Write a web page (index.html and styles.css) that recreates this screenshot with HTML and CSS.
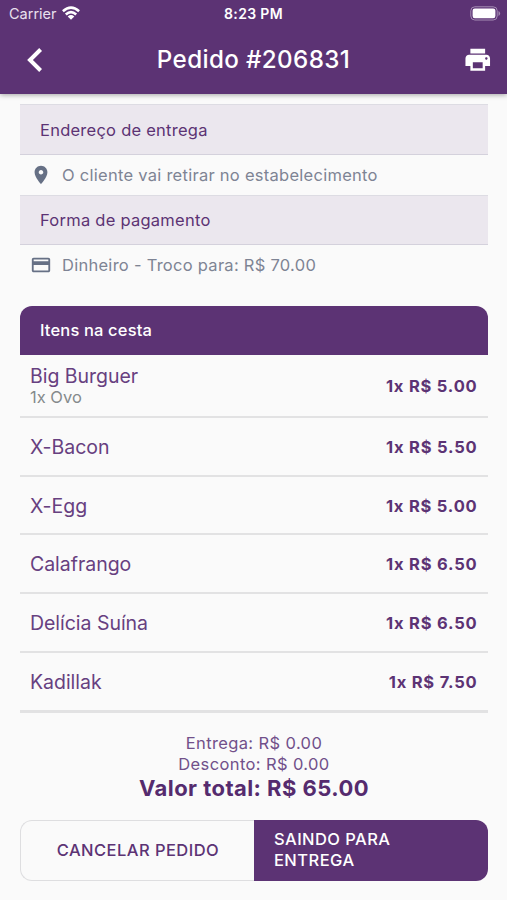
FILE: index.html
```html
<!DOCTYPE html>
<html lang="pt-BR">
<head>
<meta charset="utf-8">
<title>Pedido #206831</title>
<link rel="stylesheet" href="styles.css">
</head>
<body>
<header class="app-bar">
  <div class="status">
    <div class="carrier"><span>Carrier</span>
      <svg class="wifi" width="18" height="14" viewBox="0 0 18 14" fill="none" stroke="#fff" stroke-width="2.6"><path d="M.9 5.2Q9-1.8 17.1 5.2M3.8 8.5Q9 3.9 14.2 8.5"/><path d="M9 13.8L5.7 10.5Q9 7.7 12.3 10.5Z" fill="#fff" stroke="none"/></svg>
    </div>
    <span class="clock">8:23 PM</span>
    <svg class="battery" width="31" height="15" viewBox="0 0 31 15"><rect x=".8" y=".8" width="26.4" height="13.2" rx="4" fill="none" stroke="#a58db4" stroke-width="1"/><rect x="2.6" y="2.6" width="22.8" height="9.6" rx="2.2" fill="#fff"/><path d="M28.5 5v5q1.6-.8 1.6-2.5T28.5 5Z" fill="#a58db4"/></svg>
  </div>
  <div class="nav">
    <svg class="back" width="16" height="24" viewBox="0 0 16 24" fill="none" stroke="#fff" stroke-width="4"><path d="M13.6 1.5L3 12l10.6 10.5"/></svg>
    <h1 class="title">Pedido #206831</h1>
    <svg class="print" width="29.5" height="29.5" viewBox="0 0 24 24" fill="#fff"><path d="M19 8H5c-1.66 0-3 1.34-3 3v6h4v4h12v-4h4v-6c0-1.66-1.34-3-3-3zm-3 11H8v-5h8v5zm3-7c-.55 0-1-.45-1-1s.45-1 1-1 1 .45 1 1-.45 1-1 1zm-1-9H6v4h12V3z"/></svg>
  </div>
</header>
<main class="content">
  <h2 class="section">Endereço de entrega</h2>
  <div class="detail">
    <svg width="22" height="22" viewBox="0 0 24 24" fill="#667085"><path d="M12 2C8.13 2 5 5.13 5 9c0 5.25 7 13 7 13s7-7.75 7-13c0-3.87-3.13-7-7-7zm0 9.5c-1.38 0-2.5-1.12-2.5-2.5s1.12-2.5 2.5-2.5 2.5 1.12 2.5 2.5-1.12 2.5-2.5 2.5z"/></svg>
    <span>O cliente vai retirar no estabelecimento</span>
  </div>
  <h2 class="section payment">Forma de pagamento</h2>
  <div class="detail">
    <svg width="22" height="22" viewBox="0 0 24 24" fill="#667085"><path d="M20 4H4c-1.11 0-1.99.89-1.99 2L2 18c0 1.11.89 2 2 2h16c1.11 0 2-.89 2-2V6c0-1.11-.89-2-2-2zm0 14H4v-6h16v6zm0-10H4V6h16v2z"/></svg>
    <span>Dinheiro - Troco para: R$ 70.00</span>
  </div>
  <section class="cart">
    <h2 class="cart-title">Itens na cesta</h2>
    <ul class="items">
      <li class="item first"><div><div class="name">Big Burguer</div><div class="extra">1x Ovo</div></div><span class="price">1x R$ 5.00</span></li>
      <li class="item"><span class="name">X-Bacon</span><span class="price">1x R$ 5.50</span></li>
      <li class="item"><span class="name">X-Egg</span><span class="price">1x R$ 5.00</span></li>
      <li class="item"><span class="name">Calafrango</span><span class="price">1x R$ 6.50</span></li>
      <li class="item"><span class="name">Delícia Suína</span><span class="price">1x R$ 6.50</span></li>
      <li class="item last"><span class="name">Kadillak</span><span class="price">1x R$ 7.50</span></li>
    </ul>
  </section>
  <div class="totals">
    <div>Entrega: R$ 0.00</div>
    <div>Desconto: R$ 0.00</div>
    <div class="grand">Valor total: R$ 65.00</div>
  </div>
  <div class="actions">
    <button class="btn cancel">CANCELAR PEDIDO</button>
    <button class="btn send">SAINDO PARA ENTREGA</button>
  </div>
</main>
</body>
</html>
```
FILE: styles.css
```css
* { box-sizing: border-box; }
body { margin: 0; height: 900px; background: #fafafa; color: #5c3374; font-family: Inter, "Liberation Sans", sans-serif; font-size: 16.5px; font-weight: 400; overflow: hidden; }
h1, h2, ul { margin: 0; padding: 0; list-style: none; }
svg { display: block; flex: none; }
.app-bar { height: 94px; background: #5c3374; color: #fff; box-shadow: 0 1px 5px rgba(0,0,0,.35); }
.status { height: 27px; padding: 0 6px 0 9px; display: grid; grid-template-columns: 1fr auto 1fr; align-items: center; }
.carrier { display: flex; align-items: center; gap: 5px; font-size: 14.5px; color: #e9e0ee; }
.wifi { margin-top: -1px; }
.clock { font-size: 14px; font-weight: 600; letter-spacing: .35px; margin-left: -3px; }
.battery { justify-self: end; margin-top: -1px; }
.nav { height: 66px; padding: 0 14.5px; display: grid; grid-template-columns: 1fr auto 1fr; align-items: center; }
.back { margin-left: 12.5px; }
.title { font-size: 24.2px; font-weight: 500; letter-spacing: .36px; line-height: 30px; }
.print { justify-self: end; }
.content { padding: 10px 19.5px 0 20.4px; }
.section { height: 50.5px; padding-left: 19.6px; background: #ebe7ee; border-top: 1px solid #dddce3; border-bottom: 1.5px solid #d4d1dc; font-size: 16.5px; font-weight: 400; line-height: 50px; letter-spacing: .25px; }
.payment { line-height: 48px; }
.detail { height: 40px; padding-left: 9.6px; display: flex; align-items: center; gap: 10px; color: #7e8494; letter-spacing: .27px; }
.cart { margin-top: 21px; }
.cart-title { height: 48.5px; padding-left: 19.6px; border-radius: 12px 12px 0 0; background: #5c3374; color: #fff; font-size: 16.5px; font-weight: 500; line-height: 48px; letter-spacing: .15px; }
.item { height: 58.7px; padding: 1px 10.5px 0 9.6px; display: flex; align-items: center; justify-content: space-between; border-bottom: 2px solid #e2e2e3; }
.item.first { height: 63.6px; padding-top: 2px; }
.item.last { height: 59.7px; border-bottom-width: 3px; }
.name { font-size: 19.5px; line-height: 22px; letter-spacing: -.03px; color: #674080; }
.extra { line-height: 21px; color: #858a8c; }
.price { font-weight: 700; letter-spacing: .8px; margin-right: -.5px; }
.totals { margin-top: 20.5px; text-align: center; line-height: 21px; letter-spacing: .38px; color: #71508a; }
.grand { font-size: 22px; line-height: 26px; font-weight: 700; letter-spacing: .45px; color: #552b6e; }
.actions { margin-top: 18.7px; height: 61px; display: flex; }
.btn { flex: 1 1 0; padding: 0 19.5px; border: 0; font: 500 16.5px/21px Inter, sans-serif; letter-spacing: .45px; }
.cancel { border: 1.5px solid #dedee0; border-right: 0; border-radius: 12px 0 0 12px; background: #fafafa; color: #5c3374; }
.send { border-radius: 0 12px 12px 0; background: #5c3374; color: #fff; text-align: left; }
```
